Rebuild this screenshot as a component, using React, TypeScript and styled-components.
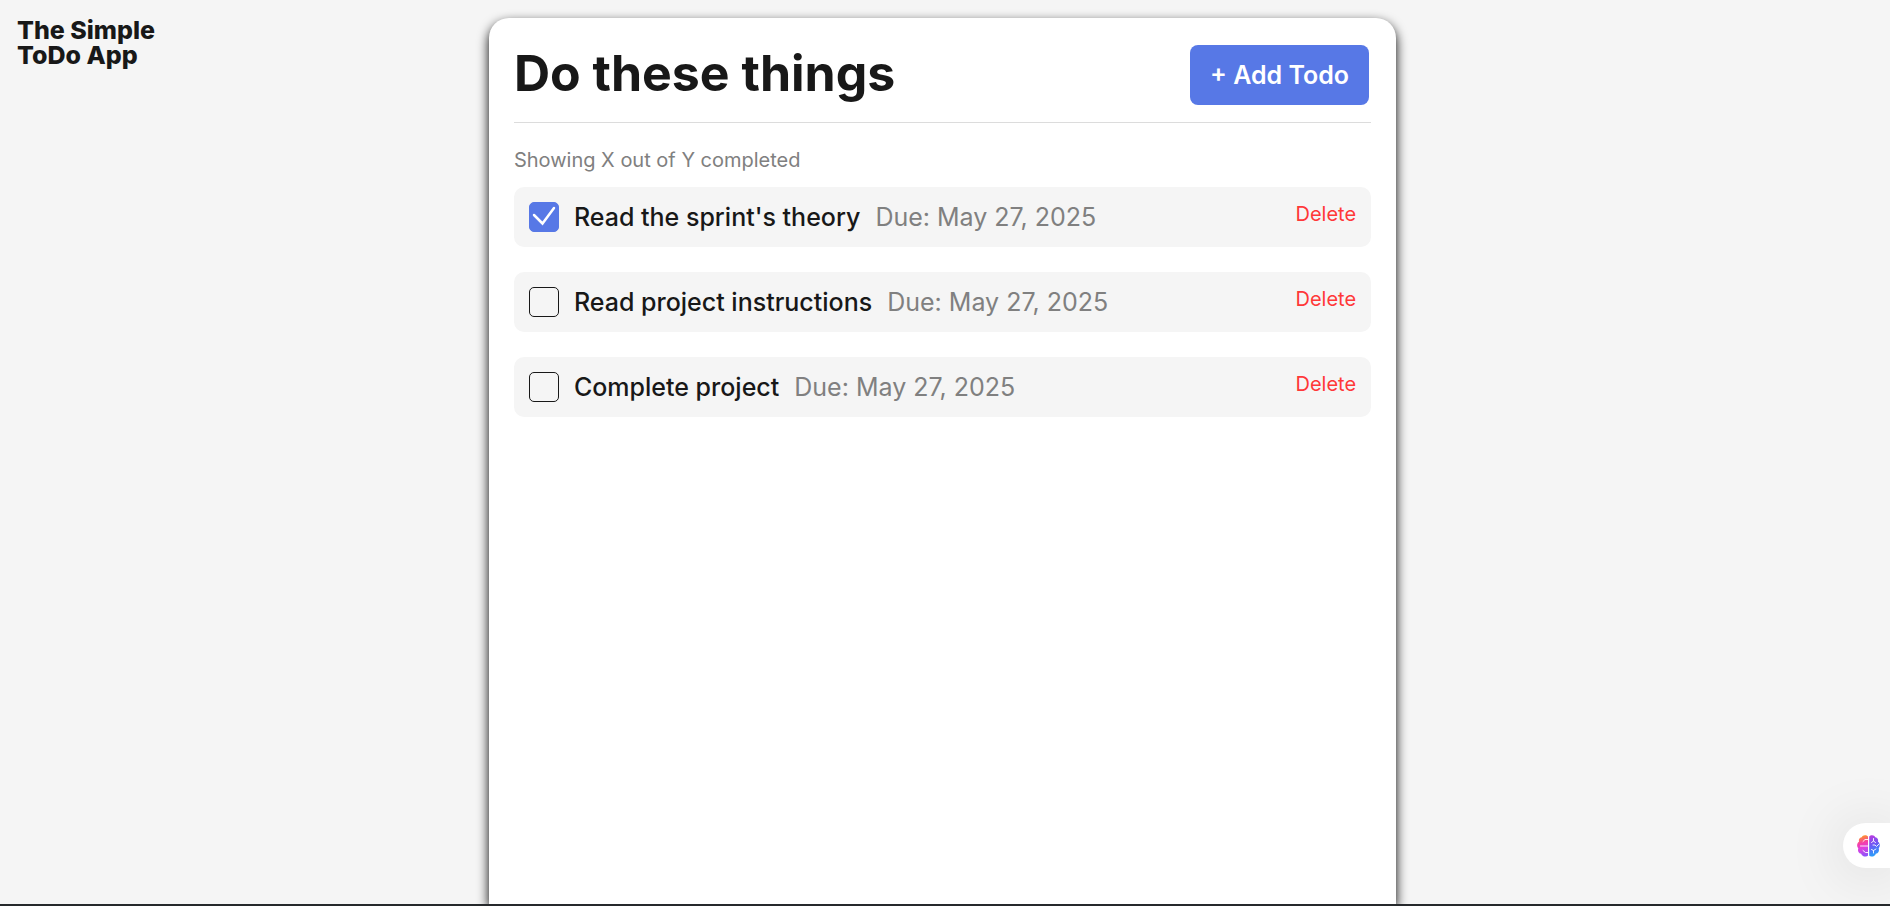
import React from "react";
import styled, { createGlobalStyle } from "styled-components";

const GlobalStyle = createGlobalStyle`
  * { box-sizing: border-box; margin: 0; }
  body { margin: 0; background: #f5f5f5; color: #181818; font-family: Inter, "Liberation Sans", sans-serif; }
`;
const Page = styled.div`
  position: relative;
  display: flex;
  flex-direction: column;
  align-items: center;
  min-height: 100vh;
  padding: 18px 5px 0 0;
  border-bottom: 2px solid #26292c;
  overflow: hidden;
`;
const Logo = styled.h1`
  position: absolute;
  top: 18px;
  left: 17px;
  width: 160px;
  font-size: 25px;
  line-height: 25px;
  font-weight: 800;
`;
const Card = styled.main`
  display: flex;
  flex-direction: column;
  flex: 1;
  width: 48vw;
  min-width: 600px;
  padding: 24px 25px;
  background: #fff;
  border-radius: 20px 20px 0 0;
  box-shadow: 0 5px 12px #000;
`;
const Header = styled.header`
  display: flex;
  justify-content: space-between;
  align-items: flex-start;
  padding: 3px 2px 17px 0;
  border-bottom: 1px solid #dcdcdc;
`;
const Title = styled.h2`
  font-size: 50px;
  line-height: 56px;
  font-weight: 700;
`;
const AddButton = styled.button`
  padding: 15px 20px;
  border: 0;
  border-radius: 8px;
  background: #5778e6;
  color: #fff;
  font: 600 25px/30px Inter, sans-serif;
  cursor: pointer;
`;
const Counter = styled.p`
  margin-top: 25px;
  font-size: 20px;
  line-height: 24px;
  color: #808080;
`;
const List = styled.ul`
  display: flex;
  flex-direction: column;
  gap: 25px;
  margin-top: 15px;
  padding: 0;
  list-style: none;
`;
const Item = styled.li`
  display: flex;
  gap: 15px;
  padding: 15px;
  border-radius: 10px;
  background: #f5f5f5;
`;
const CheckBox = styled.span`
  display: grid;
  width: 30px;
  height: 30px;

  > * { grid-area: 1 / 1; }
`;
const CheckInput = styled.input`
  appearance: none;
  width: 30px;
  height: 30px;
  border: 1px solid #181818;
  border-radius: 5px;
  cursor: pointer;

  &:checked { border-color: #5778e6; background: #5778e6; }
  &:not(:checked) + svg { visibility: hidden; }
`;
const Tick = styled.svg`
  width: 30px;
  height: 30px;
  pointer-events: none;
`;
const Name = styled.label`
  font-size: 25px;
  line-height: 30px;
  font-weight: 500;
`;
const Due = styled.span`
  font-size: 25px;
  line-height: 30px;
  color: #808080;
`;
const Delete = styled.button`
  align-self: flex-start;
  margin-left: auto;
  padding: 0;
  border: 0;
  background: none;
  color: #ff3838;
  font: 20px/24px Inter, sans-serif;
  cursor: pointer;
`;
const Assistant = styled.button`
  position: absolute;
  right: 0;
  bottom: 36px;
  display: flex;
  align-items: center;
  width: 47px;
  height: 45px;
  padding: 0 0 0 13px;
  border: 0;
  border-radius: 23px 0 0 23px;
  background: #fff;
  box-shadow: 0 4px 60px rgba(0, 0, 0, 0.15);
  cursor: pointer;
`;

const Brain = () => (
  <svg width="25" height="24" viewBox="0 0 25 24" aria-hidden="true">
    <defs>
      <linearGradient id="brainLeft" gradientUnits="userSpaceOnUse" x1="4" y1="2" x2="10" y2="22">
        <stop offset="0" stopColor="#ff9a1e" />
        <stop offset="0.35" stopColor="#f53fa8" />
        <stop offset="0.6" stopColor="#dc3fe0" />
        <stop offset="1" stopColor="#8a55fa" />
      </linearGradient>
      <linearGradient id="brainRight" gradientUnits="userSpaceOnUse" x1="14" y1="2" x2="21" y2="20">
        <stop offset="0" stopColor="#b83ae0" />
        <stop offset="0.5" stopColor="#6a5cf5" />
        <stop offset="1" stopColor="#2d9cfa" />
      </linearGradient>
    </defs>
    <path fill="url(#brainLeft)" d="M12 2.5C10.500 .6 6.500 .7 5.700 3.300 3.500 3.500 2.400 5.500 3 7.700 .8 9 .6 12.500 2.300 14.200 1.400 17 2.700 19.300 5.200 19.800 6 23 10.500 23.300 12 21.500Z" />
    <path fill="url(#brainRight)" d="M13.200 2.500C14.700 .6 18.500 .7 19.300 3.300 21.500 3.500 22.600 5.500 22 7.700 24.200 9 24.400 12.500 22.700 14.200 23.600 17 22.300 19.300 19.800 19.800 19 23 14.700 23.300 13.200 21.500Z" />
    <g fill="none" stroke="#fff" strokeWidth="0.900" strokeLinecap="round">
      <path d="M12 5.500H9L7 7.500M12 12H4.500M12 18.500H9.500L7 16.500" />
      <path d="M17.500 4.500v2.500l-2 1.500M17.500 7l2 1.500M17 11h2l1.500 1.500 2.500-2.500M17.500 19v-2.500l-2-1M17.500 16.500l2.500-1.500" />
    </g>
  </svg>
);

const todos = [
  { id: "theory", name: "Read the sprint's theory", due: "May 27, 2025", done: true },
  { id: "instructions", name: "Read project instructions", due: "May 27, 2025", done: false },
  { id: "project", name: "Complete project", due: "May 27, 2025", done: false },
];

export default function App() {
  return (
    <Page>
      <GlobalStyle />
      <Logo>The Simple ToDo App</Logo>
      <Card>
        <Header>
          <Title>Do these things</Title>
          <AddButton type="button">+ Add Todo</AddButton>
        </Header>
        <Counter>Showing X out of Y completed</Counter>
        <List>
          {todos.map((t) => (
            <Item key={t.id}>
              <CheckBox>
                <CheckInput type="checkbox" id={t.id} defaultChecked={t.done} />
                <Tick viewBox="0 0 30 30" aria-hidden="true">
                  <path d="M5 13L13.500 21.500L25 6" fill="none" stroke="#fff" strokeWidth="2.500" strokeLinecap="round" />
                </Tick>
              </CheckBox>
              <Name htmlFor={t.id}>{t.name}</Name>
              <Due>Due: {t.due}</Due>
              <Delete type="button">Delete</Delete>
            </Item>
          ))}
        </List>
      </Card>
      <Assistant type="button" aria-label="Open assistant">
        <Brain />
      </Assistant>
    </Page>
  );
}
